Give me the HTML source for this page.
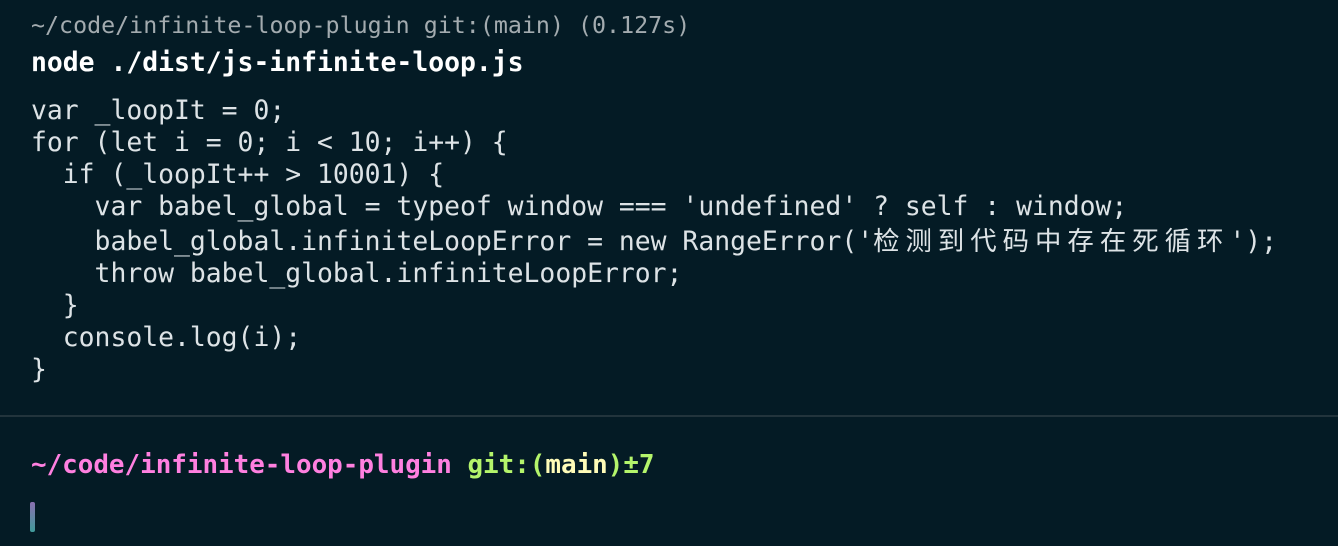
<!DOCTYPE html>
<html><head><meta charset="utf-8"><style>
html,body{margin:0;padding:0}
body{width:1338px;height:546px;background:#041b25;overflow:hidden;position:relative;font-family:"DejaVu Sans Mono","Liberation Mono","Noto Sans CJK SC",monospace;}
.l{position:absolute;left:31px;white-space:pre;}
.c{font-size:26.4px;color:#dde3e6;line-height:32px;}
.cjk{font-family:"Noto Sans CJK SC",sans-serif;letter-spacing:6px;}
</style></head><body>
<div class="l" style="top:12px;font-size:23.3px;color:#a3abaf">~/code/infinite-loop-plugin git:(main) (0.127s)</div>
<div class="l" style="top:47px;font-size:26.4px;color:#fff;font-weight:bold">node ./dist/js-infinite-loop.js</div>
<div class="l c" style="top:95px">var _loopIt = 0;
for (let i = 0; i &lt; 10; i++) {
  if (_loopIt++ &gt; 10001) {
    var babel_global = typeof window === 'undefined' ? self : window;
    babel_global.infiniteLoopError = new RangeError('<span class="cjk">检测到代码中存在死循环</span>');
    throw babel_global.infiniteLoopError;
  }
  console.log(i);
}</div>
<div style="position:absolute;left:0;top:415px;width:1338px;height:2px;background:#22343c"></div>
<div class="l" style="top:450px;font-size:25.9px;font-weight:bold;color:#ff80e0">~/code/infinite-loop-plugin <span style="color:#b4f56b">git:(</span><span style="color:#fffcb8">main</span><span style="color:#b4f56b">)±7</span></div>
<div style="position:absolute;left:30px;top:502px;width:5px;height:30px;border-radius:2px;background:linear-gradient(#8a6fb0,#3f9a9a)"></div>
</body></html>
